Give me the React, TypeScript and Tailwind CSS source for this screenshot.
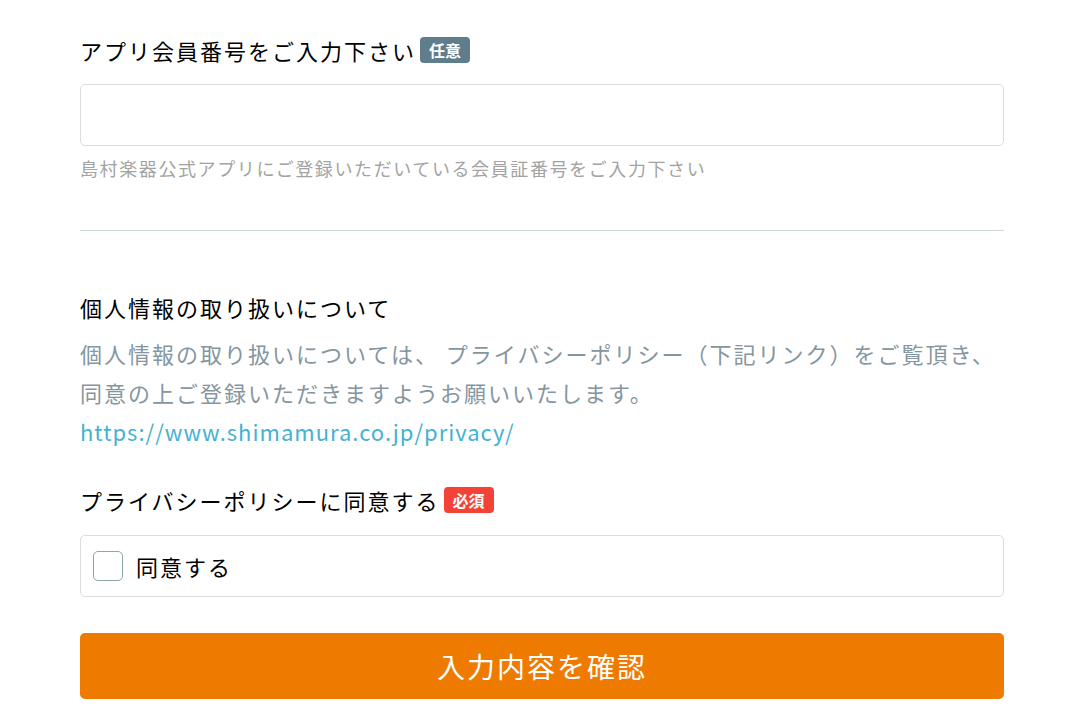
export default function App() {
  return (
    <div className="min-h-screen bg-white font-['Noto_Sans_CJK_JP',sans-serif]">
      <div className="ml-[80px] w-[924px] pt-[34px] pb-[10px]">
        {/* 会員番号 */}
        <div className="flex items-center text-[22px] leading-[32px] tracking-[2px] text-black">
          アプリ会員番号をご入力下さい
          <span className="ml-[4px] rounded-[4px] bg-[#607d8b] px-[9px] text-[16px] leading-[26px] font-bold tracking-normal text-white">
            任意
          </span>
        </div>
        <input
          type="text"
          className="mt-[18px] block h-[62px] w-full rounded-[5px] border border-[#dcdcdc] px-4 text-[20px] outline-none"
        />
        <p className="mt-[8px] text-[18px] leading-[28px] tracking-[1.6px] text-[#a3a3a3]">
          島村楽器公式アプリにご登録いただいている会員証番号をご入力下さい
        </p>

        <hr className="mt-[48px] border-t border-[#cfd8dc]" />

        {/* 個人情報 */}
        <h2 className="mt-[60px] text-[22px] leading-[32px] tracking-[2px] text-black">
          個人情報の取り扱いについて
        </h2>
        <div className="mt-[11px] text-[22px] leading-[39px] tracking-[2px] text-[#84969f]">
          <p>
            個人情報の取り扱いについては、 プライバシーポリシー（下記リンク）をご覧頂き、
            <br />
            同意の上ご登録いただきますようお願いいたします。
          </p>
          <a href="#" className="tracking-[1px] text-[#45b1d3]">
            https://www.shimamura.co.jp/privacy/
          </a>
        </div>

        {/* 同意 */}
        <div className="mt-[33px] flex items-center text-[22px] leading-[32px] tracking-[2px] text-black">
          プライバシーポリシーに同意する
          <span className="ml-[4px] rounded-[4px] bg-[#f44336] px-[9px] text-[16px] leading-[26px] font-bold tracking-normal text-white">
            必須
          </span>
        </div>
        <label className="mt-[19px] flex h-[62px] items-center rounded-[5px] border border-[#dcdcdc] px-[12px]">
          <span className="h-[30px] w-[30px] rounded-[5px] border border-[#90a4ae] bg-white" />
          <span className="ml-[13px] text-[22px] tracking-[2px] text-black">同意する</span>
        </label>

        <button className="mt-[36px] flex h-[66px] w-full items-center justify-center rounded-[5px] bg-[#ef7a00] text-[28px] tracking-[2px] text-white">
          入力内容を確認
        </button>
      </div>
    </div>
  );
}
